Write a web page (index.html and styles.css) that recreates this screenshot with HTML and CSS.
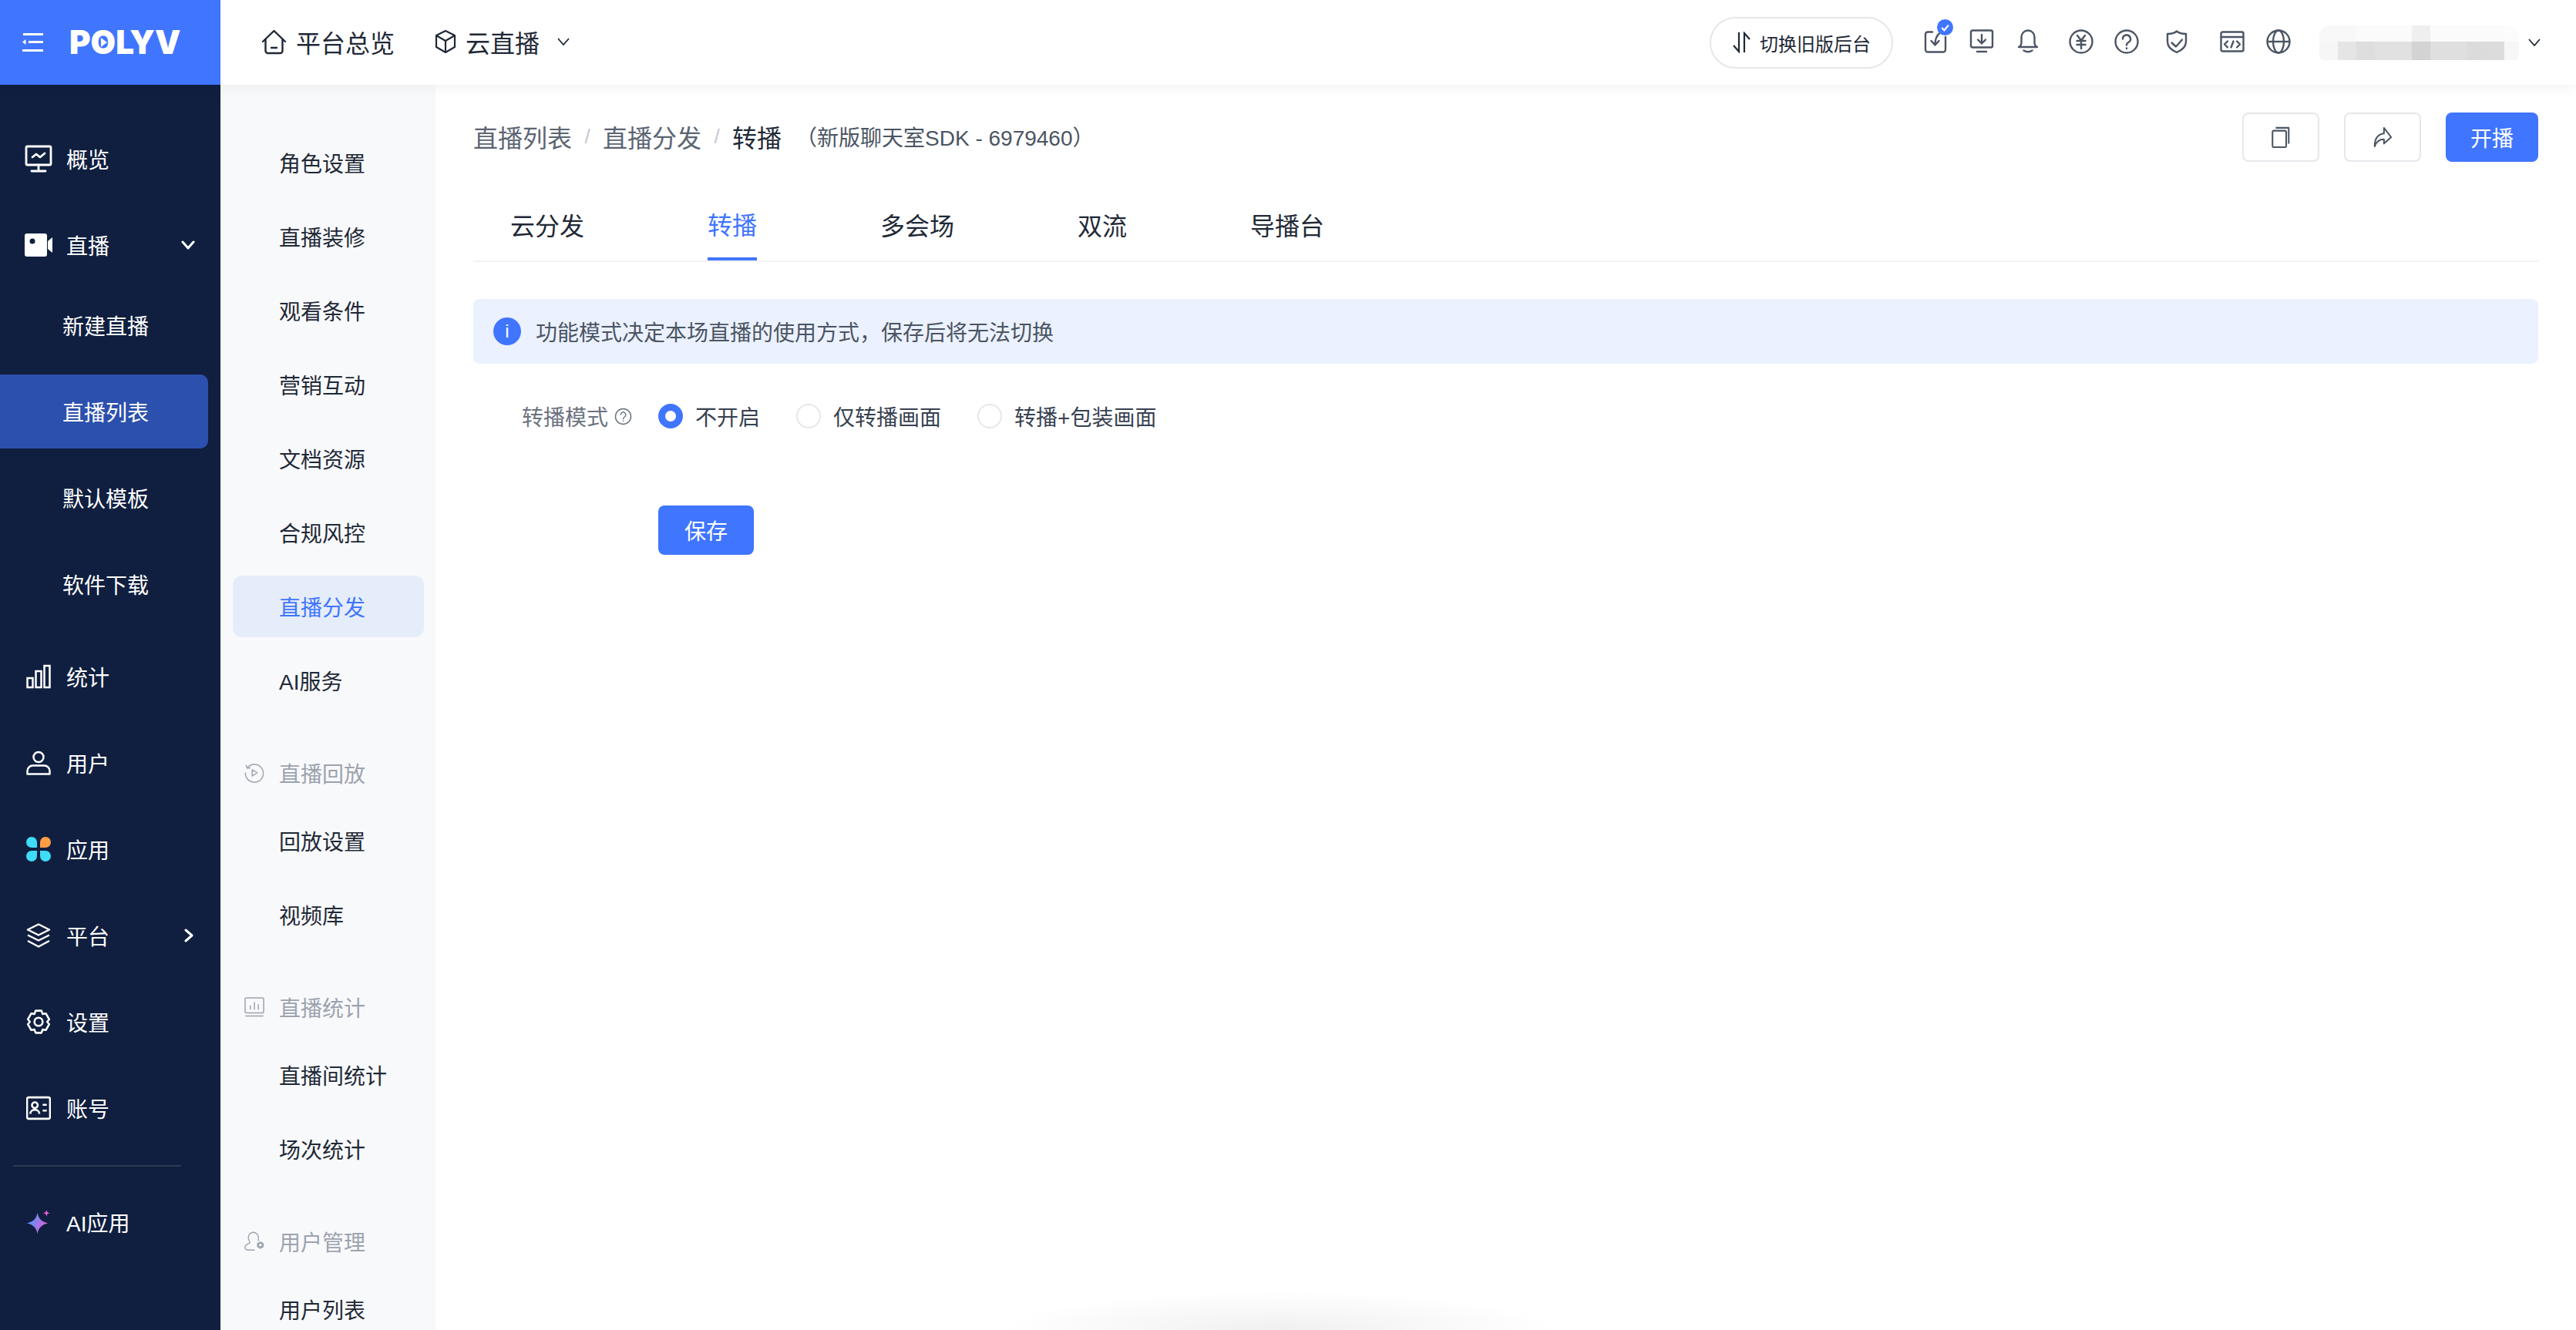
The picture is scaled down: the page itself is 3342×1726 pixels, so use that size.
FILE: index.html
```html
<!DOCTYPE html>
<html lang="zh-CN">
<head>
  <meta charset="UTF-8">
  <meta name="viewport" content="width=device-width, initial-scale=1.0">
  <title>转播 - POLYV</title>
  <link rel="stylesheet" href="styles.css">
</head>
<body>

  <!-- Top bar -->
  <header class="topbar">
    <div class="brand">
      <svg class="brand-toggle" viewBox="0 0 28 24" fill="none" stroke="#fff" stroke-width="3"><path d="M1 1.500h26M8 11.500h19M0 22.500h27"/><path d="M4.500 8v7L0 11.500z" fill="#fff" stroke="none"/></svg>
      <span class="brand-name">P<span class="brand-o">O</span>LYV</span>
    </div>
    <nav class="topnav">
      <a class="topnav-item">
        <svg class="icon-home" viewBox="0 0 33 33" fill="none" stroke="#1f2937" stroke-width="2.400" stroke-linecap="round" stroke-linejoin="round"><path d="M2 16 16.500 2 31 16"/><path d="M5.500 13v15a3 3 0 0 0 3 3h16a3 3 0 0 0 3-3V13"/><path d="M13 24h7"/></svg>
        平台总览
      </a>
      <a class="topnav-item">
        <svg class="icon-box" viewBox="0 0 28 32" fill="none" stroke="#1f2937" stroke-width="2.200" stroke-linejoin="round"><path d="M14 2 26 8v15l-12 7-12-7V8z"/><path d="M2 8l12 7 12-7M14 15v15"/></svg>
        云直播
        <svg class="chevron" viewBox="0 0 16 10" fill="none" stroke="#1f2937" stroke-width="1.800"><path d="M1 1l7 8 7-8"/></svg>
      </a>
    </nav>
    <div class="top-right">
      <button class="switch-btn">
        <svg viewBox="0 0 25 28" fill="none" stroke="#1f2937" stroke-width="2.200"><path d="M9 1v25L2 18"/><path d="M16 27V2l7 8"/></svg>
        切换旧版后台
      </button>
      <div class="tools">
        <span class="tool">
          <svg viewBox="0 0 32 32" fill="none" stroke="#4b5563" stroke-width="2.400" stroke-linecap="round" stroke-linejoin="round"><path d="M12 3.500H6a3 3 0 0 0-3 3v20a3 3 0 0 0 3 3h20a3 3 0 0 0 3-3V10"/><path d="M21.500 5c-4 3-6 8-6 15M10.500 15l5 5.500 5-5.500"/></svg>
          <span class="tool-badge"><svg viewBox="0 0 12 12" fill="none" stroke="#fff" stroke-width="2"><path d="M2 6.500l3 3 5-6"/></svg></span>
        </span>
        <span class="tool">
          <svg viewBox="0 0 32 32" fill="none" stroke="#4b5563" stroke-width="2.400" stroke-linecap="round" stroke-linejoin="round"><rect x="2" y="1.500" width="28" height="22" rx="2"/><path d="M16 7v11.500M11 13.500l5 5 5-5"/><path d="M9 29h14" stroke-linecap="butt"/></svg>
        </span>
        <span class="tool">
          <svg viewBox="0 0 32 32" fill="none" stroke="#4b5563" stroke-width="2.400" stroke-linecap="round" stroke-linejoin="round"><path d="M4 23c2.500-1 3.500-3 3.500-6v-7a8.500 8.500 0 0 1 17 0v7c0 3 1 5 3.500 6z"/><path d="M10.500 27.500q5.500 3.500 11 0"/></svg>
        </span>
        <span class="tool t-yuan">
          <svg viewBox="0 0 32 32" fill="none" stroke="#4b5563" stroke-width="2.400" stroke-linecap="round" stroke-linejoin="round"><circle cx="16" cy="16" r="14.500"/><path d="M11 8l5 6.500L21 8M10.500 15h11M10.500 20h11M16 14.500V25"/></svg>
        </span>
        <span class="tool t-help">
          <svg viewBox="0 0 32 32" fill="none" stroke="#4b5563" stroke-width="2.400" stroke-linecap="round"><circle cx="16" cy="16" r="14.500"/><path d="M11 12.500a5 5 0 1 1 7.500 4.300c-1.700 1-2.500 2-2.500 3.700"/><path d="M16 24.500v.5"/></svg>
        </span>
        <span class="tool t-shield">
          <svg viewBox="0 0 32 32" fill="none" stroke="#4b5563" stroke-width="2.400" stroke-linecap="round" stroke-linejoin="round"><path d="M16 2.500c3 2.500 7 3.500 12 3.500v10c0 7-5 11-12 14-7-3-12-7-12-14V6c5 0 9-1 12-3.500z"/><path d="M9.500 17.500l5.500 5 8-9"/></svg>
        </span>
        <span class="tool t-code">
          <svg viewBox="0 0 32 32" fill="none" stroke="#4b5563" stroke-width="2.400" stroke-linecap="round" stroke-linejoin="round"><rect x="1.500" y="3.500" width="29" height="25" rx="2"/><path d="M2 10h28"/><path d="M10 15.500l-4 4 4 4M22 15.500l4 4-4 4M17.500 15.500l-3 8"/></svg>
        </span>
        <span class="tool">
          <svg viewBox="0 0 32 32" fill="none" stroke="#4b5563" stroke-width="2.400"><circle cx="16" cy="16" r="14.500"/><ellipse cx="16" cy="16" rx="7" ry="14.500"/><path d="M2 16h28"/></svg>
        </span>
      </div>
      <div class="account"></div>
      <svg class="chevron" viewBox="0 0 16 10" fill="none" stroke="#1f2937" stroke-width="1.800"><path d="M1 1l7 8 7-8"/></svg>
    </div>
  </header>

  <div class="layout">

    <!-- Main menu -->
    <aside class="menu">
      <a class="menu-item">
        <svg class="icon-lg" viewBox="0 0 36 36" fill="none" stroke="#fff" stroke-width="2.800" stroke-linecap="round" stroke-linejoin="round"><rect x="2" y="2" width="32" height="24" rx="1.500"/><path d="M18 26v8M9 34h18M10 16l5-4 5 4 6-5"/></svg>
        <span>概览</span>
      </a>
      <a class="menu-item">
        <svg class="icon-lg" viewBox="0 0 36 36"><path d="M3 3h23a3 3 0 0 1 3 3v24a3 3 0 0 1-3 3H3a3 3 0 0 1-3-3V6a3 3 0 0 1 3-3z" fill="#fff"/><path d="M30 13l6-5v20l-6-5z" fill="#fff"/><circle cx="10" cy="13" r="3.500" fill="#101f40"/></svg>
        <span>直播</span>
        <svg class="menu-arrow" viewBox="0 0 18 12" fill="none" stroke="#fff" stroke-width="3" stroke-linecap="round" stroke-linejoin="round"><path d="M2 2l7 8 7-8"/></svg>
      </a>
      <div class="submenu">
        <a class="submenu-item">新建直播</a>
        <a class="submenu-item active">直播列表</a>
        <a class="submenu-item">默认模板</a>
        <a class="submenu-item">软件下载</a>
      </div>
      <a class="menu-item">
        <svg viewBox="0 0 32 32" fill="none" stroke="#fff" stroke-width="2.500"><rect x="1.500" y="18" width="7" height="12"/><rect x="12.500" y="9" width="7" height="21"/><rect x="23.500" y="2" width="7" height="28"/></svg>
        <span>统计</span>
      </a>
      <a class="menu-item">
        <svg viewBox="0 0 32 32" fill="none" stroke="#fff" stroke-width="2.500" stroke-linejoin="round"><circle cx="16" cy="8.500" r="6.500"/><path d="M1.500 30.500v-4a7 7 0 0 1 7-7h15a7 7 0 0 1 7 7v4z"/></svg>
        <span>用户</span>
      </a>
      <a class="menu-item">
        <svg viewBox="0 0 32 32"><path d="M7 0a7 7 0 0 1 7 7v7H7A7 7 0 0 1 7 0z" fill="#3fdcf8"/><path d="M25 0a7 7 0 0 1 0 14h-7V7a7 7 0 0 1 7-7z" fill="#ff9d45"/><path d="M7 18h7v7a7 7 0 1 1-7-7z" fill="#3fdcf8"/><path d="M18 18h7a7 7 0 1 1-7 7z" fill="#3fdcf8"/></svg>
        <span>应用</span>
      </a>
      <a class="menu-item">
        <svg viewBox="0 0 32 32" fill="none" stroke="#fff" stroke-width="2.500" stroke-linejoin="round"><path d="M16 1.500l14 7-14 7-14-7z"/><path d="M2 15.500l14 7 14-7"/><path d="M2 23l14 7.500L30 23"/></svg>
        <span>平台</span>
        <svg class="menu-arrow side" viewBox="0 0 12 18" fill="none" stroke="#fff" stroke-width="3" stroke-linecap="round" stroke-linejoin="round"><path d="M2 2l8 7-8 7"/></svg>
      </a>
      <a class="menu-item">
        <svg viewBox="1 1 30 30" fill="none" stroke="#fff" stroke-width="2.400" stroke-linejoin="round"><path d="M12.500 2.500h7L21 6.500l4-.5 4 7-2.500 3 2.500 3-4 7-4-.5-1.500 4h-7l-1.500-4-4 .5-4-7L5.500 16 3 13l4-7 4 .5z"/><circle cx="16" cy="16" r="5"/></svg>
        <span>设置</span>
      </a>
      <a class="menu-item">
        <svg viewBox="1 1 30 30" fill="none" stroke="#fff" stroke-width="2.400" stroke-linejoin="round"><rect x="2" y="3" width="28" height="26" rx="2"/><circle cx="11.500" cy="12.500" r="3.500"/><path d="M6 23c0-3 2.500-5 5.500-5s5.500 2 5.500 5M21 12h5M21 19h5"/></svg>
        <span>账号</span>
      </a>
      <div class="menu-divider"></div>
      <a class="menu-item">
        <svg viewBox="0 0 32 34">
          <defs><linearGradient id="spark" x1="0" y1="0.300" x2="1" y2="0.700"><stop offset="0" stop-color="#3f9bff"/><stop offset="1" stop-color="#f25ad6"/></linearGradient></defs>
          <path d="M14.500 4C16 12 20 16.500 29 18.500 20 20.500 16 25 14.500 33 13 25 9 20.500 0 18.500 9 16.500 13 12 14.500 4z" fill="url(#spark)"/>
          <path d="M27 0c.5 3 1.500 4 5 4.500-3.500.5-4.500 1.500-5 5-.5-3.500-1.500-4.500-5-5 3.500-.5 4.500-1.500 5-4.500z" fill="#f25ad6"/>
        </svg>
        <span>AI应用</span>
      </a>
    </aside>

    <!-- Channel settings menu -->
    <aside class="subnav">
      <a class="subnav-item">角色设置</a>
      <a class="subnav-item">直播装修</a>
      <a class="subnav-item">观看条件</a>
      <a class="subnav-item">营销互动</a>
      <a class="subnav-item">文档资源</a>
      <a class="subnav-item">合规风控</a>
      <a class="subnav-item active">直播分发</a>
      <a class="subnav-item">AI服务</a>

      <div class="subnav-group">
        <svg viewBox="0 0 28 28" fill="none" stroke="#9ca3af" stroke-width="1.600" stroke-linecap="round" stroke-linejoin="round"><path d="M4.500 6.500A12.500 12.500 0 1 1 1.500 14"/><path d="M2.500 3.500l1.500 4 4-.5"/><path d="M11 9.500l7 4.500-7 4.500z"/></svg>
        直播回放
      </div>
      <a class="subnav-item">回放设置</a>
      <a class="subnav-item">视频库</a>

      <div class="subnav-group">
        <svg viewBox="0 0 28 28" fill="none" stroke="#9ca3af" stroke-width="1.600" stroke-linecap="round"><path d="M3 22a2 2 0 0 1-2-2V3a2 2 0 0 1 2-2h22a2 2 0 0 1 2 2v17a2 2 0 0 1-2 2z"/><path d="M8.500 12v5M14 7.500V17M19.500 10.500V17M2 26.500h24"/></svg>
        直播统计
      </div>
      <a class="subnav-item">直播间统计</a>
      <a class="subnav-item">场次统计</a>

      <div class="subnav-group">
        <svg viewBox="0 0 30 30" fill="none" stroke="#9ca3af" stroke-width="1.600" stroke-linecap="round"><path d="M21 14V9a7.500 7.500 0 0 0-15 0c0 4 1 5 2 6 .5 1 .5 2-1 3-3 1-6 3-6 6 0 3 2 4 5 4h9"/><path d="M24 15l5 2.800v5.600L24 26.200l-5-2.800v-5.600z" fill="#9ca3af" stroke="none"/><circle cx="24" cy="20.600" r="2" fill="#f8f9fb" stroke="none"/></svg>
        用户管理
      </div>
      <a class="subnav-item">用户列表</a>
    </aside>

    <!-- Page content -->
    <main class="content">
      <div class="page-head">
        <div class="crumbs">
          <a class="crumb">直播列表</a>
          <span class="crumb-sep">/</span>
          <a class="crumb">直播分发</a>
          <span class="crumb-sep">/</span>
          <span class="crumb-current">转播</span>
          <span class="crumb-note">（新版聊天室SDK - 6979460）</span>
        </div>
        <div class="page-actions">
          <button class="btn-icon">
            <svg viewBox="0 0 26 30" fill="none" stroke="#4b5563" stroke-width="2.200" stroke-linejoin="round"><rect x="1.500" y="6" width="19" height="23" rx="2"/><path d="M6 2h18v22"/></svg>
          </button>
          <button class="btn-icon">
            <svg viewBox="0 0 28 30" fill="none" stroke="#4b5563" stroke-width="2.200" stroke-linejoin="round"><path d="M16 2l10 13-10 9v-6C9 18 5 22 3 28c0-10 4-17 13-18z"/></svg>
          </button>
          <button class="btn-primary btn-start">开播</button>
        </div>
      </div>

      <div class="tabs">
        <a class="tab">云分发</a>
        <a class="tab active">转播</a>
        <a class="tab">多会场</a>
        <a class="tab">双流</a>
        <a class="tab">导播台</a>
      </div>

      <div class="alert">
        <span class="alert-icon">i</span>
        功能模式决定本场直播的使用方式，保存后将无法切换
      </div>

      <div class="form-row">
        <div class="form-label">
          转播模式
          <svg viewBox="0 0 24 24" fill="none" stroke="#6b7280" stroke-width="1.500" stroke-linecap="round"><circle cx="12" cy="12" r="10.500"/><path d="M8.500 9.500a3.500 3.500 0 1 1 5.500 3c-1.200.8-2 1.500-2 2.800"/><path d="M12 18v.3"/></svg>
        </div>
        <div class="radio-group">
          <label class="radio"><span class="radio-dot checked"></span>不开启</label>
          <label class="radio"><span class="radio-dot"></span>仅转播画面</label>
          <label class="radio"><span class="radio-dot"></span>转播+包装画面</label>
        </div>
      </div>

      <button class="btn-primary btn-save">保存</button>
    </main>
  </div>

  <div class="bottom-glow"></div>

</body>
</html>
```

FILE: styles.css
```css
* { box-sizing: border-box; margin: 0; padding: 0; }

body {
  font-family: "Liberation Sans", "Noto Sans CJK SC", sans-serif;
  font-size: 28px;
  color: #1f2937;
  background: #fff;
  height: 100vh;
  overflow: hidden;
  display: flex;
  flex-direction: column;
}

button { font-family: inherit; cursor: pointer; }

/* — TOP BAR ————————————— */
.topbar {
  height: 110px;
  flex: none;
  display: flex;
  align-items: center;
  background: #fff;
  box-shadow: 0 4px 18px rgba(0,0,0,0.05);
  position: relative;
  z-index: 2;
}
.brand {
  width: 286px;
  height: 100%;
  flex: none;
  background: #4075ff;
  display: flex;
  align-items: center;
  padding-left: 29px;
}
.brand-toggle { width: 28px; height: 24px; }
.brand-name {
  margin-left: 33px;
  color: #fff;
  font-family: Inter, sans-serif;
  font-size: 42px;
  font-weight: 900;
  line-height: 1;
}
.brand-o { position: relative; }
.brand-o::after {
  content: "";
  position: absolute;
  left: 50%;
  top: 50%;
  transform: translate(-38%, -50%);
  border-left: 8px solid #fff;
  border-top: 6px solid transparent;
  border-bottom: 6px solid transparent;
}
.topnav { display: flex; align-items: center; margin-left: 53px; gap: 52px; padding-bottom: 2px; }
.topnav-item { display: flex; align-items: center; gap: 12px; font-size: 32px; }
.icon-home { width: 33px; height: 33px; }
.icon-box { width: 28px; height: 32px; }
.chevron { width: 16px; height: 10px; flex: none; }
.topnav-item .chevron { margin-left: 11px; }

.top-right { margin-left: auto; padding-right: 46px; display: flex; align-items: center; }
.switch-btn {
  width: 238px;
  height: 67px;
  border: 2px solid #e5e7eb;
  border-radius: 34px;
  background: #fff;
  color: #1f2937;
  font-size: 24px;
  display: flex;
  align-items: center;
  justify-content: center;
  gap: 11px;
}
.switch-btn svg { width: 25px; height: 28px; }
.tools { display: flex; align-items: center; gap: 28px; margin-left: 39px; margin-top: -2px; }
.tool { position: relative; width: 32px; height: 32px; display: block; }
.tool svg { width: 32px; height: 32px; display: block; overflow: visible; }
.t-yuan { margin-left: 9px; }
.t-help { margin-left: -1px; }
.t-shield { margin-left: 5px; }
.t-code { margin-left: 12px; }
.tool-badge {
  position: absolute;
  top: -13px;
  left: 18px;
  width: 21px;
  height: 21px;
  border-radius: 50%;
  background: #4075ff;
  display: flex;
  align-items: center;
  justify-content: center;
}
.tool .tool-badge svg { width: 13px; height: 13px; }
.account {
  width: 259px;
  height: 45px;
  margin-left: 37px;
  margin-right: 12px;
  border-radius: 14px 14px 6px 6px;
  background:
    linear-gradient(90deg, #f5f6f5 0 24px, #e5e5e5 24px 48px, #dedede 48px 72px, #e1e1e1 72px 120px, #d3d3d3 120px 144px, #dfdfdf 144px 192px, #dbdbdb 192px 216px, #dcdcdc 216px 240px, #f6f7f6 240px) 0 21px / 100% 24px no-repeat,
    linear-gradient(90deg, #f8f8f8 0 48px, #fbfbfb 48px 120px, #efefef 120px 144px, #fbfbfb 144px 240px, #fcfcfc 240px) 0 0 / 100% 21px no-repeat;
}

/* — LAYOUT ————————————— */
.layout { flex: 1; min-height: 0; display: flex; }

/* — MAIN MENU ————————————— */
.menu {
  width: 286px;
  flex: none;
  background: #101f40;
  color: #fff;
  padding: 48px 16px 0 0;
}
.menu-item {
  height: 96px;
  margin-bottom: 16px;
  padding-left: 34px;
  display: flex;
  align-items: center;
  gap: 20px;
  position: relative;
}
.menu-item > svg:first-child { width: 32px; height: 32px; flex: none; }
.menu-item > svg.icon-lg { width: 36px; height: 36px; margin: 0 -2px; }
.menu-arrow { position: absolute; left: 235px; width: 18px; height: 12px; }
.menu-arrow.side { left: 239px; width: 12px; height: 18px; }
.submenu { margin: -8px 0 24px; }
.submenu-item {
  height: 96px;
  margin-bottom: 16px;
  padding-left: 81px;
  display: flex;
  align-items: center;
  border-radius: 0 10px 10px 0;
}
.submenu-item.active { background: #2c50ad; }
.submenu-item:last-child { margin-bottom: 0; }
.menu-divider { height: 2px; margin: 26px 35px 24px 17px; background: #2b3955; }

/* — CHANNEL MENU ————————————— */
.subnav {
  width: 279px;
  flex: none;
  background: #f8f9fb;
  padding: 61px 15px 0 16px;
}
.subnav-item {
  height: 80px;
  margin-bottom: 16px;
  padding-left: 60px;
  display: flex;
  align-items: center;
  border-radius: 12px;
  color: #1f2937;
}
.subnav-item.active { background: #e6edfa; color: #4075ff; }
.subnav-group {
  height: 80px;
  margin: 40px 0 8px;
  padding-left: 15px;
  display: flex;
  align-items: center;
  gap: 19px;
  color: #9ca3af;
}
.subnav-group svg { width: 26px; height: 26px; flex: none; }

/* — PAGE HEAD ————————————— */
.content { flex: 1; min-width: 0; padding: 36px 49px 0; }
.page-head { display: flex; align-items: center; justify-content: space-between; height: 64px; }
.crumbs { display: flex; align-items: center; margin-top: -2px; }
.crumb { font-size: 32px; color: #5b6573; }
.crumb-sep { width: 40px; text-align: center; color: #c4c8cf; font-size: 26px; }
.crumb-current { font-size: 32px; color: #1f2937; }
.crumb-note { margin-left: 18px; color: #4b5563; }
.page-actions { display: flex; gap: 32px; }
.btn-icon {
  width: 100px;
  height: 64px;
  background: #fff;
  border: 2px solid #e5e7eb;
  border-radius: 8px;
  display: flex;
  align-items: center;
  justify-content: center;
}
.btn-icon svg { width: 26px; height: 28px; }
.btn-primary {
  height: 64px;
  border: none;
  border-radius: 8px;
  background: #4075ff;
  color: #fff;
  font-size: 28px;
}
.btn-start { width: 120px; }

/* — TABS ————————————— */
.tabs {
  margin-top: 36px;
  height: 94px;
  padding-left: 48px;
  display: flex;
  gap: 160px;
  border-bottom: 2px solid #f1f2f4;
}
.tab {
  height: 92px;
  display: flex;
  align-items: center;
  font-size: 32px;
  padding-bottom: 3px;
}
.tab.active { color: #4075ff; border-bottom: 4px solid #4075ff; padding: 0; }

/* — ALERT ————————————— */
.alert {
  margin-top: 48px;
  height: 84px;
  padding-left: 26px;
  display: flex;
  align-items: center;
  gap: 19px;
  background: #ebf1ff;
  border-radius: 8px;
  color: #4b5563;
}
.alert-icon {
  width: 36px;
  height: 36px;
  border-radius: 50%;
  background: #4075ff;
  color: #fff;
  font-size: 24px;
  line-height: 36px;
  text-align: center;
  flex: none;
}

/* — FORM ————————————— */
.form-row { margin-top: 36px; height: 64px; display: flex; align-items: center; }
.form-label {
  width: 240px;
  padding-right: 34px;
  display: flex;
  align-items: center;
  justify-content: flex-end;
  gap: 8px;
  color: #6b7280;
}
.form-label svg { width: 23px; height: 23px; }
.radio-group { display: flex; gap: 47px; }
.radio { display: flex; align-items: center; gap: 16px; color: #374151; }
.radio-dot {
  width: 32px;
  height: 32px;
  border-radius: 50%;
  border: 2px solid #e5e7eb;
  background: #fff;
}
.radio-dot.checked { border: 9px solid #4075ff; }
.btn-save { display: block; width: 124px; margin: 84px 0 0 240px; }

/* soft shadow along the bottom edge of the window */
.bottom-glow {
  position: fixed;
  left: 1300px;
  bottom: 0;
  width: 720px;
  height: 50px;
  background: radial-gradient(ellipse 50% 100% at 50% 100%, #f0f0f0, rgba(255,255,255,0));
}
```
